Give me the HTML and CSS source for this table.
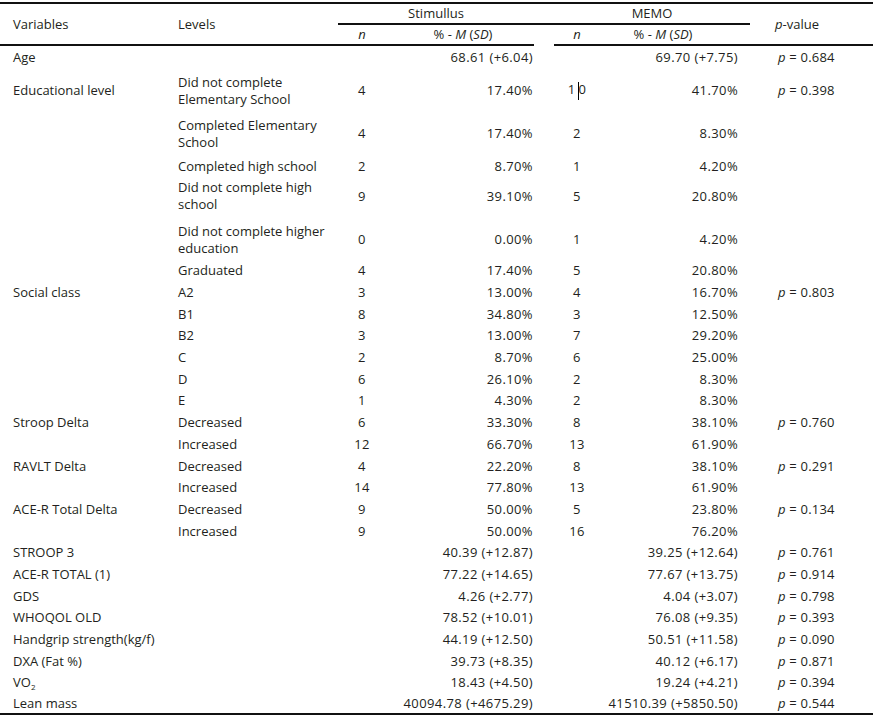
FILE: index.html
```html
<!DOCTYPE html>
<html lang="en">
<head>
<meta charset="utf-8">
<title>Table</title>
<link rel="stylesheet" href="styles.css">
</head>
<body>
<table class="data">
  <colgroup>
    <col class="c-var"><col class="c-lev"><col class="c-n"><col class="c-pct"><col class="c-sp"><col class="c-n2"><col class="c-pct2"><col class="c-p">
  </colgroup>
  <thead>
    <tr class="h1">
      <th rowspan="2" class="var hb">Variables</th>
      <th rowspan="2" class="lev hb">Levels</th>
      <th colspan="2" class="grp">Stimullus</th>
      <th class="grp"></th>
      <th colspan="2" class="grp">MEMO</th>
      <th rowspan="2" class="pvh hb"><i>p</i>-value</th>
    </tr>
    <tr class="h2">
      <th class="n hb"><i>n</i></th>
      <th class="pcth hb">% - <i>M</i> (<i>SD</i>)</th>
      <th></th>
      <th class="n hb"><i>n</i></th>
      <th class="pcth2 hb">% - <i>M</i> (<i>SD</i>)</th>
    </tr>
  </thead>
  <tbody>
    <tr class="r-age"><td class="var">Age</td><td class="lev"></td><td class="n"></td><td class="pct">68.61 (+6.04)</td><td></td><td class="n"></td><td class="pct2">69.70 (+7.75)</td><td class="pv"><i>p</i> = 0.684</td></tr>
    <tr class="r-two"><td class="var">Educational level</td><td class="lev">Did not complete<br>Elementary School</td><td class="n">4</td><td class="pct">17.40%</td><td></td><td class="n">1<span class="caret"></span>0</td><td class="pct2">41.70%</td><td class="pv"><i>p</i> = 0.398</td></tr>
    <tr class="r-two"><td class="var"></td><td class="lev">Completed Elementary<br>School</td><td class="n">4</td><td class="pct">17.40%</td><td></td><td class="n">2</td><td class="pct2">8.30%</td><td class="pv"></td></tr>
    <tr class="r-chs"><td class="var"></td><td class="lev">Completed high school</td><td class="n">2</td><td class="pct">8.70%</td><td></td><td class="n">1</td><td class="pct2">4.20%</td><td class="pv"></td></tr>
    <tr class="r-dnch"><td class="var"></td><td class="lev">Did not complete high<br>school</td><td class="n">9</td><td class="pct">39.10%</td><td></td><td class="n">5</td><td class="pct2">20.80%</td><td class="pv"></td></tr>
    <tr class="r-dnche"><td class="var"></td><td class="lev">Did not complete higher<br>education</td><td class="n">0</td><td class="pct">0.00%</td><td></td><td class="n">1</td><td class="pct2">4.20%</td><td class="pv"></td></tr>
    <tr><td class="var"></td><td class="lev">Graduated</td><td class="n">4</td><td class="pct">17.40%</td><td></td><td class="n">5</td><td class="pct2">20.80%</td><td class="pv"></td></tr>
    <tr><td class="var">Social class</td><td class="lev">A2</td><td class="n">3</td><td class="pct">13.00%</td><td></td><td class="n">4</td><td class="pct2">16.70%</td><td class="pv"><i>p</i> = 0.803</td></tr>
    <tr><td class="var"></td><td class="lev">B1</td><td class="n">8</td><td class="pct">34.80%</td><td></td><td class="n">3</td><td class="pct2">12.50%</td><td class="pv"></td></tr>
    <tr><td class="var"></td><td class="lev">B2</td><td class="n">3</td><td class="pct">13.00%</td><td></td><td class="n">7</td><td class="pct2">29.20%</td><td class="pv"></td></tr>
    <tr><td class="var"></td><td class="lev">C</td><td class="n">2</td><td class="pct">8.70%</td><td></td><td class="n">6</td><td class="pct2">25.00%</td><td class="pv"></td></tr>
    <tr><td class="var"></td><td class="lev">D</td><td class="n">6</td><td class="pct">26.10%</td><td></td><td class="n">2</td><td class="pct2">8.30%</td><td class="pv"></td></tr>
    <tr><td class="var"></td><td class="lev">E</td><td class="n">1</td><td class="pct">4.30%</td><td></td><td class="n">2</td><td class="pct2">8.30%</td><td class="pv"></td></tr>
    <tr><td class="var">Stroop Delta</td><td class="lev">Decreased</td><td class="n">6</td><td class="pct">33.30%</td><td></td><td class="n">8</td><td class="pct2">38.10%</td><td class="pv"><i>p</i> = 0.760</td></tr>
    <tr><td class="var"></td><td class="lev">Increased</td><td class="n">12</td><td class="pct">66.70%</td><td></td><td class="n">13</td><td class="pct2">61.90%</td><td class="pv"></td></tr>
    <tr><td class="var">RAVLT Delta</td><td class="lev">Decreased</td><td class="n">4</td><td class="pct">22.20%</td><td></td><td class="n">8</td><td class="pct2">38.10%</td><td class="pv"><i>p</i> = 0.291</td></tr>
    <tr><td class="var"></td><td class="lev">Increased</td><td class="n">14</td><td class="pct">77.80%</td><td></td><td class="n">13</td><td class="pct2">61.90%</td><td class="pv"></td></tr>
    <tr><td class="var">ACE-R Total Delta</td><td class="lev">Decreased</td><td class="n">9</td><td class="pct">50.00%</td><td></td><td class="n">5</td><td class="pct2">23.80%</td><td class="pv"><i>p</i> = 0.134</td></tr>
    <tr><td class="var"></td><td class="lev">Increased</td><td class="n">9</td><td class="pct">50.00%</td><td></td><td class="n">16</td><td class="pct2">76.20%</td><td class="pv"></td></tr>
    <tr><td class="var">STROOP 3</td><td class="lev"></td><td class="n"></td><td class="pct">40.39 (+12.87)</td><td></td><td class="n"></td><td class="pct2">39.25 (+12.64)</td><td class="pv"><i>p</i> = 0.761</td></tr>
    <tr><td class="var">ACE-R TOTAL (1)</td><td class="lev"></td><td class="n"></td><td class="pct">77.22 (+14.65)</td><td></td><td class="n"></td><td class="pct2">77.67 (+13.75)</td><td class="pv"><i>p</i> = 0.914</td></tr>
    <tr><td class="var">GDS</td><td class="lev"></td><td class="n"></td><td class="pct">4.26 (+2.77)</td><td></td><td class="n"></td><td class="pct2">4.04 (+3.07)</td><td class="pv"><i>p</i> = 0.798</td></tr>
    <tr><td class="var">WHOQOL OLD</td><td class="lev"></td><td class="n"></td><td class="pct">78.52 (+10.01)</td><td></td><td class="n"></td><td class="pct2">76.08 (+9.35)</td><td class="pv"><i>p</i> = 0.393</td></tr>
    <tr><td class="var">Handgrip strength(kg/f)</td><td class="lev"></td><td class="n"></td><td class="pct">44.19 (+12.50)</td><td></td><td class="n"></td><td class="pct2">50.51 (+11.58)</td><td class="pv"><i>p</i> = 0.090</td></tr>
    <tr><td class="var">DXA (Fat %)</td><td class="lev"></td><td class="n"></td><td class="pct">39.73 (+8.35)</td><td></td><td class="n"></td><td class="pct2">40.12 (+6.17)</td><td class="pv"><i>p</i> = 0.871</td></tr>
    <tr><td class="var">VO<sub>2</sub></td><td class="lev"></td><td class="n"></td><td class="pct">18.43 (+4.50)</td><td></td><td class="n"></td><td class="pct2">19.24 (+4.21)</td><td class="pv"><i>p</i> = 0.394</td></tr>
    <tr class="last"><td class="var">Lean mass</td><td class="lev"></td><td class="n"></td><td class="pct">40094.78 (+4675.29)</td><td></td><td class="n"></td><td class="pct2">41510.39 (+5850.50)</td><td class="pv"><i>p</i> = 0.544</td></tr>
  </tbody>
</table>
</body>
</html>
```
FILE: styles.css
```css
html, body {
  margin: 0;
  padding: 0;
  background: #ffffff;
}

body {
  font-family: "Open Sans", "Noto Sans", "Liberation Sans", sans-serif;
  font-size: 13px;
  color: #231f20;
}

.data {
  margin-top: 2px;
  width: 873px;
  table-layout: fixed;
  border-collapse: separate;
  border-spacing: 0;
  border-top: 2px solid #111;
}

.c-var { width: 170px; }
.c-lev { width: 168px; }
.c-n { width: 48px; }
.c-pct { width: 148px; }
.c-sp { width: 20px; }
.c-n2 { width: 46px; }
.c-pct2 { width: 150px; }
.c-p { width: 123px; }

.data th,
.data td {
  padding: 0;
  font-weight: normal;
  line-height: 17px;
  vertical-align: middle;
  white-space: nowrap;
}

.data th {
  text-align: center;
}

.data th.var,
.data td.var {
  text-align: left;
  padding-left: 13px;
}

.data th.lev,
.data td.lev {
  text-align: left;
  padding-left: 8px;
}

.h1 { height: 21px; }
.h2 { height: 21px; }

.grp {
  border-bottom: 2px solid #111;
}

.hb {
  border-bottom: 2px solid #111;
}

.data th.pcth {
  padding-left: 6px;
}

.data th.pcth2 {
  padding-right: 24px;
}

.data th.pvh {
  padding-right: 29px;
}

.data td.n {
  text-align: center;
  letter-spacing: 0.4px;
}

.data td.pct {
  text-align: right;
  padding-right: 1px;
  letter-spacing: 0.4px;
}

.data td.pct2 {
  text-align: right;
  padding-right: 12px;
  letter-spacing: 0.4px;
}

.data td.pv {
  text-align: left;
  padding-left: 28px;
  letter-spacing: 0.2px;
}

tbody tr { height: 21.7px; }
tbody tr.r-age { height: 23px; }
tbody tr.r-two { height: 43px; }
tbody tr.r-chs { height: 22px; }
tbody tr.r-dnch { height: 38px; }
tbody tr.r-dnche { height: 45px; }
tbody tr.r-dnche td { padding-top: 4px; }

tbody tr.last td {
  border-bottom: 2px solid #111;
}

.caret {
  display: inline-block;
  width: 1px;
  height: 18px;
  background: #000;
  vertical-align: middle;
  margin: 0 0 0 2px;
}

sub {
  font-size: 8px;
  line-height: 0;
  vertical-align: -3px;
}
```
